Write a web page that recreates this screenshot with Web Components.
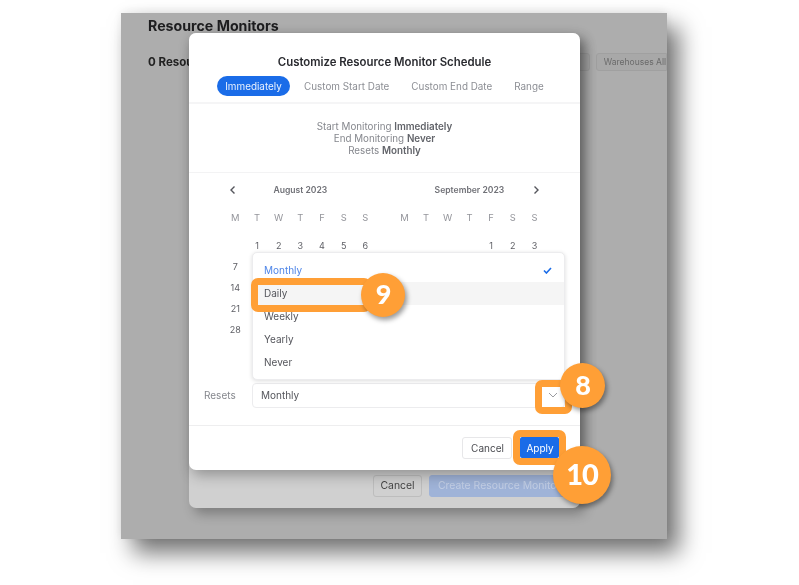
<!DOCTYPE html>
<html>
<head>
<meta charset="utf-8">
<title>Resource Monitors</title>
<style>
    html, body { margin: 0; height: 100%; background: #fff; overflow: hidden; }
    body { font-family: Inter, "Liberation Sans", sans-serif; }
</style>
</head>
<body>
<shot-frame>
    <monitor-page></monitor-page>
    <schedule-modal></schedule-modal>
    <callout-ring style="left:130px;top:265px;width:106px;height:20px"></callout-ring>
    <callout-ring style="left:414px;top:367px;width:23px;height:20px"></callout-ring>
    <callout-ring style="left:392px;top:417px;width:39px;height:21px"></callout-ring>
    <callout-badge number="9" style="left:240px;top:260px;width:44px;height:44px;font-size:27px"></callout-badge>
    <callout-badge number="8" style="left:439px;top:350px;width:45px;height:45px;font-size:27px"></callout-badge>
    <callout-badge number="10" style="left:432px;top:433px;width:58px;height:58px;font-size:29px"></callout-badge>
</shot-frame>

<script>
class ShotFrame extends HTMLElement {
    constructor() {
        super();
        this.attachShadow({ mode: 'open' }).innerHTML = `
        <style>
            :host {
                display: block;
                position: relative;
                margin: 13px 0 0 121px;
                width: 546px;
                height: 526px;
                background: #adadad;
                box-shadow: 12px 14px 22px rgba(0,0,0,0.55), 0 -2px 10px rgba(0,0,0,0.08);
                filter: blur(0.35px);
            }
        </style>
        <slot></slot>`;
    }
}

class MonitorPage extends HTMLElement {
    constructor() {
        super();
        this.attachShadow({ mode: 'open' }).innerHTML = `
        <style>
            :host {
                display: block;
                height: 100%;
                overflow: hidden;
                padding-left: 27px;
                color: #1d1d1f;
            }
            h1 {
                margin: 4px 0 0;
                font-size: 14.2px;
                line-height: 18px;
                font-weight: 700;
            }
            .bar {
                display: flex;
                align-items: center;
                margin-top: 18px;
                height: 18px;
            }
            .count { font-size: 11.5px; font-weight: 700; color: #222; }
            .pills { display: flex; gap: 6px; margin-left: auto; }
            .pill {
                box-sizing: border-box;
                height: 18px;
                padding: 0 0 0 7px;
                border: 1px solid #a0a0a0;
                border-radius: 3px 0 0 3px;
                background: #a8a8a8;
                color: #6a6a6a;
                font-size: 8.5px;
                line-height: 16px;
                white-space: nowrap;
            }
            .blank { width: 40px; border-radius: 3px; }
        </style>
        <h1>Resource Monitors</h1>
        <div class="bar">
            <span class="count">0 Resource Monitors</span>
            <div class="pills">
                <span class="pill blank"></span>
                <span class="pill">Warehouses All</span>
            </div>
        </div>`;
    }
}

class ScheduleModal extends HTMLElement {
    constructor() {
        super();
        this.attachShadow({ mode: 'open' }).innerHTML = `
        <style>
            :host {
                position: absolute;
                left: 68px;
                top: 20px;
                width: 391px;
                height: 475px;
                font-size: 10px;
            }
            .back {
                position: absolute;
                inset: 0;
                box-sizing: border-box;
                border-radius: 7px;
                background: #d0d0d0;
                box-shadow: 5px 6px 12px rgba(0,0,0,0.28);
                display: flex;
                justify-content: flex-end;
                align-items: flex-end;
                gap: 7px;
                padding: 0 15px 11px 0;
            }
            .back span {
                box-sizing: border-box;
                height: 22px;
                border-radius: 3px;
                line-height: 20px;
                font-size: 10.4px;
            }
            .back .cancel { width: 49px; border: 1px solid #bdbdbd; color: #444; text-align: center; }
            .back .create { width: 136px; padding-left: 8px; border: 1px solid #9fb3d8; background: #9fb3d8; color: #c3cfe5; white-space: nowrap; }
            .front {
                position: relative;
                height: 437px;
                border-radius: 7px;
                background: #fff;
                box-shadow: 3px 5px 14px rgba(0,0,0,0.3);
                display: flex;
                flex-direction: column;
            }
            header {
                height: 71px;
                flex: none;
                box-sizing: border-box;
                padding-top: 21px;
                border-bottom: 2px solid #f5f5f6;
                text-align: center;
            }
            h2 {
                margin: 0 0 6px;
                font-size: 11.4px;
                line-height: 16px;
                font-weight: 600;
                color: #2a2b30;
            }
            .summary {
                height: 69px;
                flex: none;
                box-sizing: border-box;
                display: flex;
                flex-direction: column;
                justify-content: center;
                padding-top: 2px;
                border-bottom: 1px solid #f3f3f4;
                text-align: center;
                line-height: 12px;
                font-size: 9.8px;
                color: #85878d;
            }
            .summary b { font-weight: 600; color: #62646a; }
            .cal {
                height: 210px;
                flex: none;
                box-sizing: border-box;
                padding: 7px 0 0 35.5px;
            }
            .resets {
                display: flex;
                align-items: center;
                flex: none;
                height: 25px;
                padding: 0 15px;
                color: #85878d;
            }
            .resets label { width: 48px; flex: none; padding-bottom: 1px; }
            .foot {
                margin-top: 17px;
                flex: 1;
                display: flex;
                justify-content: flex-end;
                align-items: flex-start;
                gap: 8px;
                padding: 11px 21px 0 0;
                border-top: 1px solid #eeeeef;
            }
            button {
                box-sizing: border-box;
                height: 22px;
                border-radius: 3px;
                font: inherit;
                padding: 0 0 0 1px;
            }
            .btn-cancel { width: 50px; border: 1px solid #e7e7e9; background: #fff; color: #4a4b50; }
            .btn-apply { width: 39px; height: 21px; border: 0; border-radius: 2px; background: #1a6ce8; color: #fff; }
        </style>
        <div class="back">
            <span class="cancel">Cancel</span>
            <span class="create">Create Resource Monitor</span>
        </div>
        <div class="front">
            <header>
                <h2>Customize Resource Monitor Schedule</h2>
                <tab-bar></tab-bar>
            </header>
            <div class="summary">
                <div>Start Monitoring <b>Immediately</b></div>
                <div>End Monitoring <b>Never</b></div>
                <div>Resets <b>Monthly</b></div>
            </div>
            <div class="cal"><range-calendar></range-calendar></div>
            <div class="resets">
                <label>Resets</label>
                <reset-select></reset-select>
            </div>
            <div class="foot">
                <button class="btn-cancel">Cancel</button>
                <button class="btn-apply">Apply</button>
            </div>
        </div>`;
    }
}

class TabBar extends HTMLElement {
    constructor() {
        super();
        this.attachShadow({ mode: 'open' }).innerHTML = `
        <style>
            :host {
                display: flex;
                align-items: center;
                height: 20px;
                padding-left: 28px;
                color: #8c8e94;
                font-size: 9.9px;
                line-height: 21px;
                white-space: nowrap;
            }
            .on {
                box-sizing: border-box;
                width: 73px;
                height: 20px;
                border-radius: 10px;
                background: #1a6ce8;
                color: #e9f1fe;
                text-align: center;
            }
            span { display: block; }
            .a { margin-left: 14px; }
            .b { margin-left: 22px; }
            .c { margin-left: 22px; }
        </style>
        <span class="on">Immediately</span>
        <span class="a">Custom Start Date</span>
        <span class="b">Custom End Date</span>
        <span class="c">Range</span>`;
    }
}

class RangeCalendar extends HTMLElement {
    constructor() {
        super();
        this.attachShadow({ mode: 'open' }).innerHTML = `
        <style>
            :host { display: flex; gap: 17.4px; width: 321px; position: relative; }
            svg { position: absolute; top: 5px; width: 8px; height: 10px; fill: none; stroke: #55565c; stroke-width: 1.4; }
            .prev { left: 4.5px; }
            .next { right: 5.5px; }
        </style>
        <cal-month name="August 2023" offset="1" days="31"></cal-month>
        <cal-month name="September 2023" offset="4" days="30"></cal-month>
        <svg class="prev" viewBox="0 0 8 10"><path d="M5.5 1.5 2 5l3.5 3.5"/></svg>
        <svg class="next" viewBox="0 0 8 10"><path d="M2.5 1.5 6 5 2.5 8.5"/></svg>`;
    }
}

class CalMonth extends HTMLElement {
    connectedCallback() {
        const offset = Number(this.getAttribute('offset'));
        const days = Number(this.getAttribute('days'));
        let cells = '';
        for (let i = 0; i < offset; i++) cells += '<span></span>';
        for (let d = 1; d <= days; d++) cells += `<span>${d}</span>`;
        const heads = ['M', 'T', 'W', 'T', 'F', 'S', 'S'].map(l => `<span>${l}</span>`).join('');
        this.attachShadow({ mode: 'open' }).innerHTML = `
        <style>
            :host { display: block; width: 151.7px; }
            .name { height: 20px; line-height: 20px; text-align: center; font-size: 8.6px; font-weight: 600; color: #707177; }
            .grid { display: grid; grid-template-columns: repeat(7, 1fr); text-align: center; }
            .heads { margin-top: 8px; height: 20px; line-height: 20px; font-size: 9.4px; color: #94959b; }
            .days { margin-top: 6.5px; grid-auto-rows: 21px; line-height: 21px; font-size: 9px; color: #5f6066; }
        </style>
        <div class="name">${this.getAttribute('name')}</div>
        <div class="grid heads">${heads}</div>
        <div class="grid days">${cells}</div>`;
    }
}

class ResetSelect extends HTMLElement {
    constructor() {
        super();
        this.attachShadow({ mode: 'open' }).innerHTML = `
        <style>
            :host { display: block; position: relative; flex: 1; height: 25px; }
            .field {
                box-sizing: border-box;
                height: 25px;
                padding: 0 5px 1px 8px;
                display: flex;
                align-items: center;
                justify-content: space-between;
                border: 1px solid #ececee;
                border-radius: 4px;
                color: #55565c;
            }
            .field svg { width: 10px; height: 6px; fill: none; stroke: #9a9ba0; stroke-width: 1; margin-right: 1px; }
            .menu {
                position: absolute;
                left: 0;
                right: 0;
                bottom: 28px;
                height: 128px;
                box-sizing: border-box;
                padding: 6px 0;
                background: #fff;
                border: 1px solid #ececee;
                border-radius: 5px;
                box-shadow: 0 1px 4px rgba(0,0,0,0.14);
                color: #55565c;
            }
            .opt {
                height: 23px;
                line-height: 23px;
                padding: 0 11px;
                display: flex;
                justify-content: space-between;
                align-items: center;
            }
            .sel { color: #4f86e8; }
            .hover { background: #f5f5f5; }
            .opt svg { width: 9px; height: 7px; fill: none; stroke: #1a6ce8; stroke-width: 1.6; margin-right: 1px; }
        </style>
        <div class="menu">
            <div class="opt sel">Monthly<svg viewBox="0 0 9 7"><path d="M1 3.5 3.4 6 8 1"/></svg></div>
            <div class="opt hover">Daily</div>
            <div class="opt">Weekly</div>
            <div class="opt">Yearly</div>
            <div class="opt">Never</div>
        </div>
        <div class="field">
            <span>Monthly</span>
            <svg viewBox="0 0 10 6"><path d="M1 1l4 4 4-4"/></svg>
        </div>`;
    }
}

class CalloutRing extends HTMLElement {
    constructor() {
        super();
        this.attachShadow({ mode: 'open' }).innerHTML = `
        <style>
            :host {
                position: absolute;
                box-sizing: content-box;
                border: 7px solid #ff9f36;
                border-radius: 7px;
            }
        </style>`;
    }
}

class CalloutBadge extends HTMLElement {
    connectedCallback() {
        this.attachShadow({ mode: 'open' }).innerHTML = `
        <style>
            :host {
                position: absolute;
                box-sizing: border-box;
                padding-bottom: 3px;
                display: flex;
                align-items: center;
                justify-content: center;
                border-radius: 50%;
                background: #ff9f36;
                box-shadow: 2px 3px 5px rgba(0,0,0,0.4);
                color: #fff;
                font-family: Lato, "Open Sans", sans-serif;
                font-weight: 900;
                letter-spacing: -1px;
            }
        </style>
        ${this.getAttribute('number')}`;
    }
}

customElements.define('shot-frame', ShotFrame);
customElements.define('monitor-page', MonitorPage);
customElements.define('schedule-modal', ScheduleModal);
customElements.define('tab-bar', TabBar);
customElements.define('range-calendar', RangeCalendar);
customElements.define('cal-month', CalMonth);
customElements.define('reset-select', ResetSelect);
customElements.define('callout-ring', CalloutRing);
customElements.define('callout-badge', CalloutBadge);
</script>
</body>
</html>
